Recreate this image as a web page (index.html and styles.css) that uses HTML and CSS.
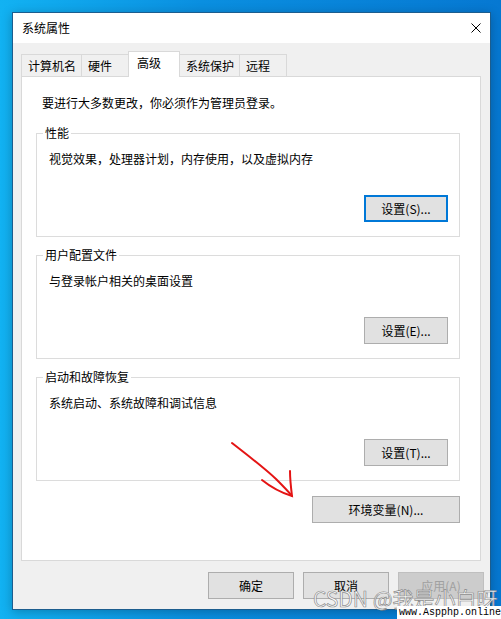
FILE: index.html
```html
<!DOCTYPE html>
<html lang="zh-CN">

<head>
    <meta charset="UTF-8">
    <title>系统属性</title>
    <link rel="stylesheet" href="styles.css">
</head>

<body>
    <div class="window">
        <div class="titlebar">
            <span class="title">系统属性</span>
            <span class="close">
                <svg width="10" height="10" viewBox="0 0 10 10">
                    <path d="M0.5 0.5 L9.5 9.5 M9.5 0.5 L0.5 9.5" stroke="#000" stroke-width="1" fill="none"/>
                </svg>
            </span>
        </div>
        <div class="client">
            <div class="tabs">
                <span class="tab">计算机名</span>
                <span class="tab">硬件</span>
                <span class="tab on">高级</span>
                <span class="tab">系统保护</span>
                <span class="tab">远程</span>
            </div>
            <div class="panel">
                <p class="intro">要进行大多数更改，你必须作为管理员登录。</p>
                <fieldset class="group">
                    <legend>性能</legend>
                    <p class="desc">视觉效果，处理器计划，内存使用，以及虚拟内存</p>
                    <div class="group-foot"><button class="btn focus">设置(S)...</button></div>
                </fieldset>
                <fieldset class="group">
                    <legend>用户配置文件</legend>
                    <p class="desc">与登录帐户相关的桌面设置</p>
                    <div class="group-foot"><button class="btn">设置(E)...</button></div>
                </fieldset>
                <fieldset class="group">
                    <legend>启动和故障恢复</legend>
                    <p class="desc">系统启动、系统故障和调试信息</p>
                    <div class="group-foot"><button class="btn">设置(T)...</button></div>
                </fieldset>
                <div class="env-row"><button class="btn wide">环境变量(N)...</button></div>
            </div>
            <div class="actions">
                <button class="btn">确定</button>
                <button class="btn">取消</button>
                <button class="btn" disabled>应用(A)</button>
            </div>
        </div>
    </div>

    <!-- 手绘箭头 -->
    <svg class="arrow" width="501" height="619" viewBox="0 0 501 619">
        <path d="M232 443 C246 454 262 466 276 479 C283 486 288 491 292 496" stroke="#e41414" stroke-width="2" fill="none" stroke-linecap="round"/>
        <path d="M262 480 C272 488 282 493 292 496 C291 488 290 479 290 471" stroke="#e41414" stroke-width="2" fill="none" stroke-linecap="round"/>
    </svg>

    <div class="mark">CSDN @我是小白呀</div>
    <div class="site">www.Aspphp.online</div>
</body>

</html>
```

FILE: styles.css
```css
* {
    margin: 0;
    padding: 0;
    box-sizing: border-box;
}

body {
    width: 501px;
    height: 619px;
    overflow: hidden;
    position: relative;
    background: linear-gradient(90deg, #12b2f2 0%, #0a8fe0 40%, #0678d2 100%);
    font-family: "Noto Sans CJK SC", "Noto Sans", sans-serif;
    font-size: 12px;
    line-height: 16px;
    color: #000;
}

.window {
    width: 479px;
    height: 598px;
    margin: 12px 0 0 12px;
    border: 1px solid #1c5d8e;
    background: #f0f0f0;
    box-shadow: 0 2px 10px rgba(0, 0, 0, .25);
}

.titlebar {
    height: 30px;
    background: #fff;
    display: flex;
    align-items: center;
    justify-content: space-between;
    padding-left: 9px;
}

.close {
    width: 28px;
    height: 30px;
    display: flex;
    align-items: center;
    justify-content: center;
}

.close svg {
    display: block;
}

.client {
    padding: 8px 9px 0 8px;
}

.tabs {
    display: flex;
    align-items: flex-end;
    height: 25px;
}

.tab {
    height: 22px;
    min-width: 48px;
    padding: 0 5px 0 6px;
    border: 1px solid #d9d9d9;
    border-bottom: none;
    margin-right: -1px;
    line-height: 22px;
    background: #f0f0f0;
}

.tab.on {
    position: relative;
    z-index: 1;
    height: 26px;
    min-width: 52px;
    padding-left: 8px;
    margin-bottom: -1px;
    background: #fff;
}

.panel {
    height: 485px;
    background: #fff;
    border: 1px solid #d9d9d9;
    padding: 18px 20px 0 14px;
}

.intro {
    margin-left: 6px;
}

.group {
    border: 1px solid #dcdcdc;
    margin-top: 10px;
    padding: 10px 11px 14px 12px;
}

.intro + .group {
    margin-top: 14px;
}

.group legend {
    margin-left: -6px;
    padding: 0 2px;
    line-height: 16px;
}

.group-foot {
    display: flex;
    justify-content: flex-end;
    margin-top: 28px;
}

.btn {
    width: 84px;
    height: 27px;
    font-family: inherit;
    font-size: 12px;
    color: #000;
    background: #e1e1e1;
    border: 1px solid #adadad;
}

.btn.focus {
    border: 2px solid #0078d7;
}

.btn[disabled] {
    color: #a0a0a0;
    background: #cccccc;
    border-color: #bfbfbf;
}

.env-row {
    display: flex;
    justify-content: flex-end;
    margin-top: 15px;
}

.btn.wide {
    width: 148px;
}

.actions {
    display: flex;
    justify-content: flex-end;
    gap: 9px;
    margin: 11px -3px 0 0;
}

.actions .btn {
    width: 86px;
}

.arrow {
    position: absolute;
    left: 0;
    top: 0;
    pointer-events: none;
}

.mark {
    position: absolute;
    left: 313px;
    top: 585px;
    white-space: nowrap;
    font-size: 21px;
    line-height: 26px;
    color: rgba(255, 255, 255, .85);
    -webkit-text-stroke: 0.7px rgba(110, 110, 110, .8);
}

.site {
    position: absolute;
    right: 0;
    bottom: 0;
    width: 104px;
    height: 13px;
    padding-left: 2px;
    white-space: nowrap;
    background: #fff;
    font-family: "Liberation Mono", monospace;
    font-size: 10px;
    line-height: 13px;
    color: #000;
}
```
